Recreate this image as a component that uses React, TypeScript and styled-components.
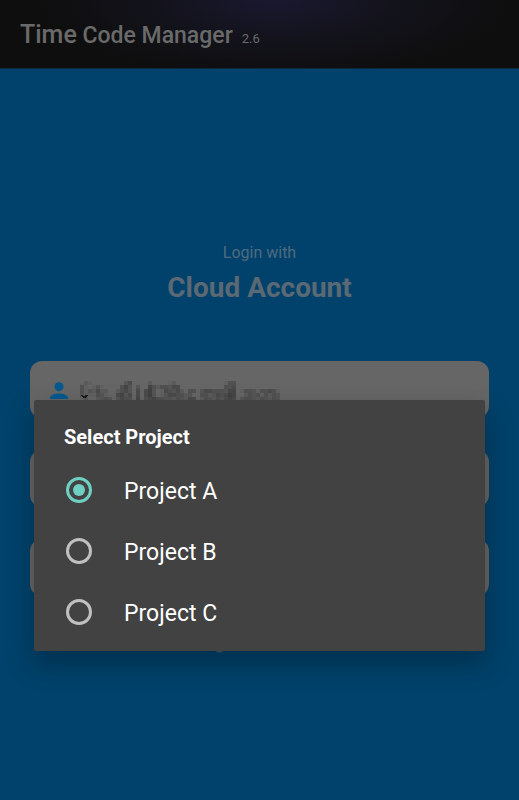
import React, { useState } from "react";
import styled, { createGlobalStyle } from "styled-components";

const GlobalStyle = createGlobalStyle`
  * { box-sizing: border-box; }
  html, body, #root { height: 100%; }
  body { margin: 0; background: #00426b; font-family: Roboto, sans-serif; }
`;

const Page = styled.div`
  position: relative;
  min-height: 100%;
  display: flex;
  flex-direction: column;
  background: #00426b;
`;

const Header = styled.header`
  display: flex;
  align-items: baseline;
  gap: 9px;
  height: 69px;
  padding: 18px 20px 0;
  border-bottom: 1px solid #0c2a40;
  background: radial-gradient(ellipse 240px 80px at 53% 0, #1a182f, #12121a 55%, #0e0e0e 100%);
  color: #6a6a6a;
`;

const AppName = styled.h1`
  margin: 0;
  font-size: 23px;
  line-height: 33px;
  font-weight: 500;
`;

const LeadWord = styled.span`
  font-size: 25px;
`;

const Version = styled.span`
  font-size: 13px;
`;

const Login = styled.main`
  display: flex;
  flex-direction: column;
  padding: 172px 30px 0;
`;

const Lead = styled.p`
  margin: 0;
  text-align: center;
  font-size: 16px;
  line-height: 24px;
  color: #4f6b80;
`;

const Title = styled.h2`
  margin: 5px 0 55px;
  text-align: center;
  font-size: 28px;
  line-height: 36px;
  font-weight: 700;
  color: #5b6974;
`;

const Fields = styled.form`
  display: flex;
  flex-direction: column;
  gap: 32px;
`;

const Field = styled.label`
  position: relative;
  display: flex;
  align-items: center;
  gap: 12px;
  height: 57px;
  padding: 0 20px;
  border-radius: 12px;
  background: #666;
`;

const Input = styled.input`
  flex: 1;
  min-width: 0;
  border: 0;
  outline: 0;
  background: transparent;
  color: #222;
  font: 400 20px Roboto, sans-serif;
`;

const Mosaic = styled.svg`
  position: absolute;
  left: 50px;
  top: 20px;
`;

const FootMark = styled.svg`
  margin: 52px 0 0 186px;
`;

const Overlay = styled.div`
  position: absolute;
  inset: 0;
  padding: 400px 34px 0;
`;

const Dialog = styled.section`
  padding: 20px 30px 9px;
  border-radius: 2px;
  background: #424242;
  box-shadow: 0 12px 26px 2px rgba(0, 0, 0, 0.26);
  color: #fff;
`;

const DialogTitle = styled.h3`
  margin: 0 0 5px;
  font-size: 20px;
  line-height: 34px;
  font-weight: 700;
`;

const Option = styled.label`
  display: flex;
  align-items: center;
  gap: 30px;
  height: 61px;
  font-size: 23px;
`;

const OptionText = styled.span`
  padding-top: 3px;
`;

const Radio = styled.input`
  appearance: none;
  display: grid;
  place-items: center;
  width: 26px;
  height: 26px;
  margin: 0 2px;
  border: 3px solid #c0c0c0;
  border-radius: 50%;
  &:checked { border-color: #6fcfc3; }
  &:checked::before {
    content: "";
    width: 12px;
    height: 12px;
    border-radius: 50%;
    background: #6fcfc3;
  }
`;

const projects = ["Project A", "Project B", "Project C"];

// Darkness of each 4px cell that hides the address, 0 (clear) to 9.
const cells = [
  "02100000000350000200001200000000000014400000000000",
  "41013100004630300642443550000000000044500000000000",
  "41325220024530505730154352044035544436601443144541",
  "31114310056350505730135544230044235457600243414243",
  "13002343035440604564433243255024324356503443243243",
];

export default function App() {
  const [selected, setSelected] = useState(projects[0]);
  return (
    <Page>
      <GlobalStyle />
      <Header>
        <AppName><LeadWord>Time</LeadWord> Code Manager</AppName>
        <Version>2.6</Version>
      </Header>
      <Login>
        <Lead>Login with</Lead>
        <Title>Cloud Account</Title>
        <Fields>
          <Field>
            <svg width="18" height="18" viewBox="4 3 16 16" fill="#00598f">
              <circle cx="12" cy="8" r="4" />
              <path d="M4 20v-2c0-2.700 5.300-4 8-4s8 1.300 8 4v2z" />
            </svg>
            <Input type="email" aria-label="Email" />
            <Mosaic width="200" height="20" shapeRendering="crispEdges" aria-hidden="true">
              {cells.map((row, y) =>
                row.split("").map((level, x) => (
                  <rect key={`${x}-${y}`} x={x * 4} y={y * 4} width="4" height="4" fill="#242424" opacity={Number(level) * 0.08} />
                ))
              )}
              <path d="M2 14q2 4 5 0" fill="none" stroke="#1c1c1c" strokeWidth="2" />
            </Mosaic>
          </Field>
          <Field><Input type="password" aria-label="Password" /></Field>
          <Field><Input type="text" aria-label="Project" /></Field>
        </Fields>
        <FootMark width="7" height="5" viewBox="0 0 7 5" aria-hidden="true">
          <ellipse cx="3.500" cy="3" rx="3" ry="1.500" fill="#465a68" />
        </FootMark>
      </Login>
      <Overlay>
        <Dialog role="dialog" aria-labelledby="dialog-title">
          <DialogTitle id="dialog-title">Select Project</DialogTitle>
          {projects.map((p) => (
            <Option key={p}>
              <Radio type="radio" name="project" checked={selected === p} onChange={() => setSelected(p)} />
              <OptionText>{p}</OptionText>
            </Option>
          ))}
        </Dialog>
      </Overlay>
    </Page>
  );
}
